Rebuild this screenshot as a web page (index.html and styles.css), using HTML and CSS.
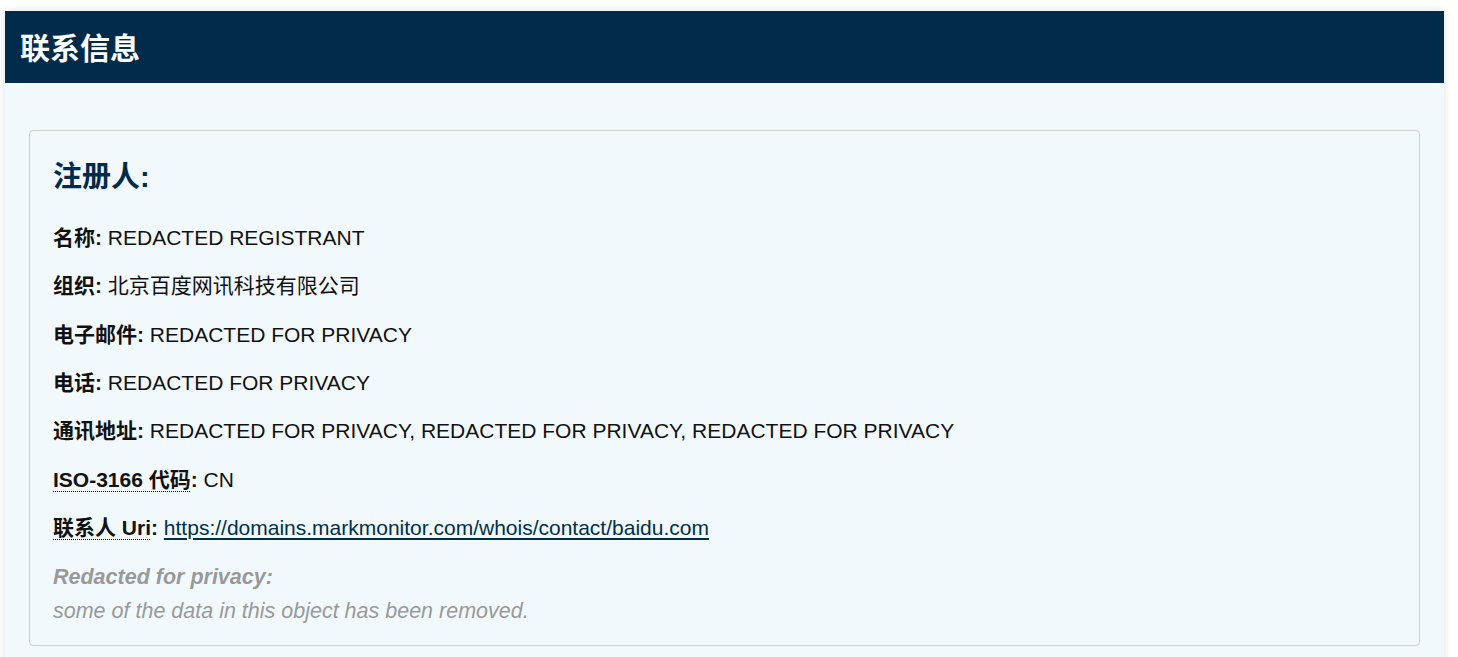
FILE: index.html
```html
<!DOCTYPE html>
<html lang="zh-CN">
<head>
<meta charset="utf-8">
<title>联系信息</title>
<link rel="stylesheet" href="styles.css">
</head>
<body>
<section class="panel">
  <header class="panel-head"><h2>联系信息</h2></header>
  <div class="panel-body">
    <div class="card">
      <h3 class="card-title">注册人:</h3>
      <p class="row"><b>名称:</b> REDACTED REGISTRANT</p>
      <p class="row"><b>组织:</b> 北京百度网讯科技有限公司</p>
      <p class="row"><b>电子邮件:</b> REDACTED FOR PRIVACY</p>
      <p class="row"><b>电话:</b> REDACTED FOR PRIVACY</p>
      <p class="row"><b>通讯地址:</b> REDACTED FOR PRIVACY, REDACTED FOR PRIVACY, REDACTED FOR PRIVACY</p>
      <p class="row"><b><abbr title="ISO-3166 国家代码">ISO-3166 代码</abbr>:</b> CN</p>
      <p class="row"><b><abbr title="统一资源标识符">联系人 Uri</abbr>:</b> <a href="#">https://domains.markmonitor.com/whois/contact/baidu.com</a></p>
      <div class="redacted">
        <p class="redacted-title">Redacted for privacy:</p>
        <p class="redacted-text">some of the data in this object has been removed.</p>
      </div>
    </div>
  </div>
</section>
</body>
</html>
```
FILE: styles.css
```css
html, body {
  margin: 0;
  padding: 0;
  background: #ffffff;
}
body {
  font-family: "Liberation Sans", "Noto Sans CJK SC", Arial, sans-serif;
  color: #111;
  padding: 11px 14px 0 5px;
}
.panel {
  background: #f2f9fd;
  box-shadow: 0 0 8px rgba(0, 0, 0, 0.12);
}
.panel-head {
  background: #002b4a;
  height: 72px;
  display: flex;
  align-items: center;
  padding: 0 15px 3px;
  box-sizing: border-box;
}
.panel-head h2 {
  margin: 0;
  color: #ffffff;
  font-size: 30px;
  font-weight: bold;
}
.panel-body {
  padding: 47px 24px 24px 24px;
}
.card {
  border: 1px solid #cfcfcf;
  border-radius: 4px;
  padding: 25px 23px 17px 23px;
}
.card-title {
  margin: 0 0 24px;
  font-size: 29px;
  line-height: 42px;
  color: #002b4a;
  font-weight: bold;
}
.row {
  margin: 0 0 16.83px;
  font-size: 21px;
  line-height: 31.5px;
  color: #111;
}
.row b {
  font-weight: bold;
}
abbr {
  text-decoration: underline dotted;
  text-underline-offset: 4px;
  text-decoration-thickness: 1px;
}
.row a {
  color: #003049;
  text-decoration: underline;
  text-underline-offset: 3px;
}
.redacted {
  color: #999;
  font-style: italic;
  font-size: 21.5px;
  padding-top: 1px;
}
.redacted p {
  margin: 0;
  line-height: 33.5px;
}
.redacted-title {
  font-weight: bold;
}
```
